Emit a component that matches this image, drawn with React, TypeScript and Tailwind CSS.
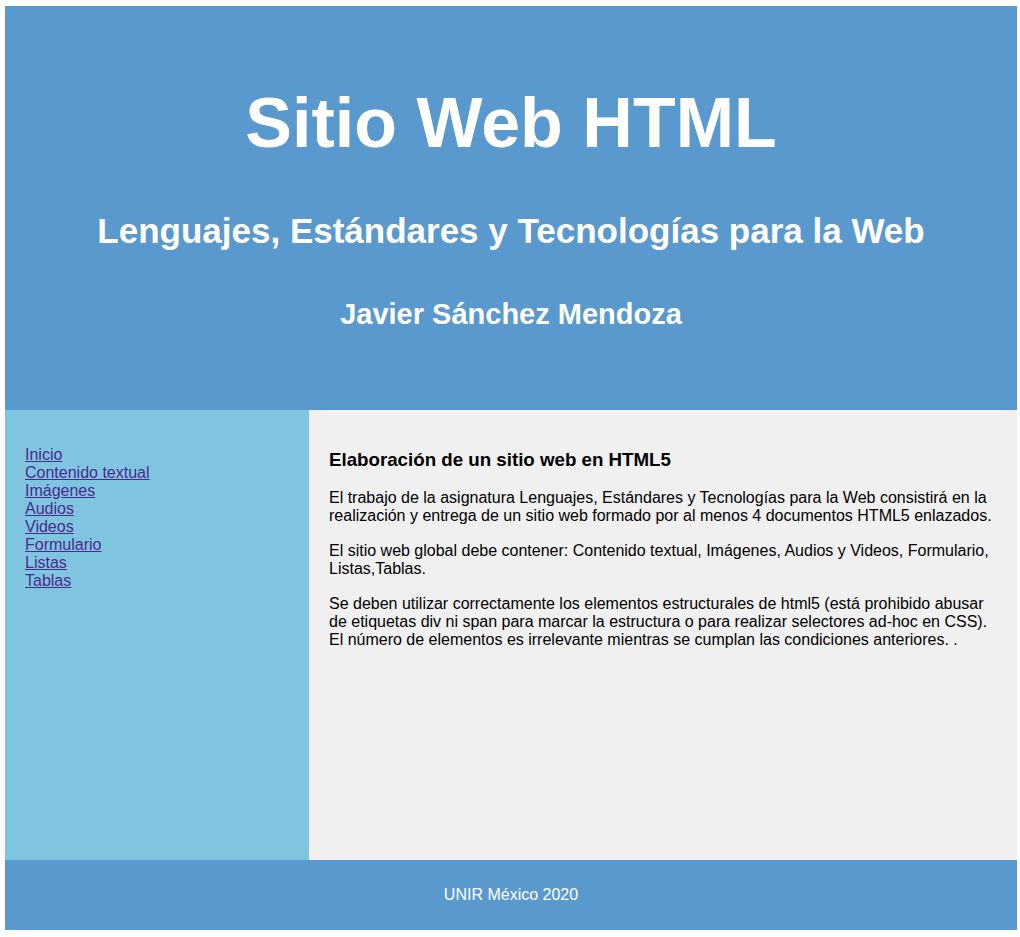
export default function App() {
  const links = [
    "Inicio",
    "Contenido textual",
    "Imágenes",
    "Audios",
    "Videos",
    "Formulario",
    "Listas",
    "Tablas",
  ];
  return (
    <div className="pt-[6px] pl-[5px] pr-[3px] font-['Liberation_Sans',Arial,Helvetica,sans-serif] text-[16px] text-black">
      <header className="h-[404px] bg-[#5999cd] text-white text-center flex flex-col items-center pt-[82px]">
        <h1 className="text-[70px] leading-none font-bold">Sitio Web HTML</h1>
        <h2 className="text-[35px] leading-none font-bold mt-[55px]">
          Lenguajes, Estándares y Tecnologías para la Web
        </h2>
        <h3 className="text-[29px] leading-none font-bold mt-[52px]">
          Javier Sánchez Mendoza
        </h3>
      </header>
      <div className="flex h-[450px]">
        <nav className="w-[304px] shrink-0 bg-[#80c5e0] pt-[36px] pl-[20px]">
          <ul className="leading-[18px]">
            {links.map((l) => (
              <li key={l}>
                <a href="#" className="text-[#4b2a8c] underline">
                  {l}
                </a>
              </li>
            ))}
          </ul>
        </nav>
        <main className="flex-1 bg-[#f0f0f0] px-[20px] pt-[39px] leading-[18px]">
          <h3 className="text-[18.72px] leading-[21.5px] font-bold">
            Elaboración de un sitio web en HTML5
          </h3>
          <p className="mt-[18.5px]">
            El trabajo de la asignatura Lenguajes, Estándares y Tecnologías para la Web consistirá en la
            realización y entrega de un sitio web formado por al menos 4 documentos HTML5 enlazados.
          </p>
          <p className="mt-[17px]">
            El sitio web global debe contener: Contenido textual, Imágenes, Audios y Videos, Formulario,
            Listas,Tablas.
          </p>
          <p className="mt-[17px]">
            Se deben utilizar correctamente los elementos estructurales de html5 (está prohibido abusar
            de etiquetas div ni span para marcar la estructura o para realizar selectores ad-hoc en CSS).
            El número de elementos es irrelevante mientras se cumplan las condiciones anteriores. .
          </p>
        </main>
      </div>
      <footer className="h-[70px] bg-[#5999cd] text-white flex items-center justify-center">
        <p>UNIR México 2020</p>
      </footer>
    </div>
  );
}
